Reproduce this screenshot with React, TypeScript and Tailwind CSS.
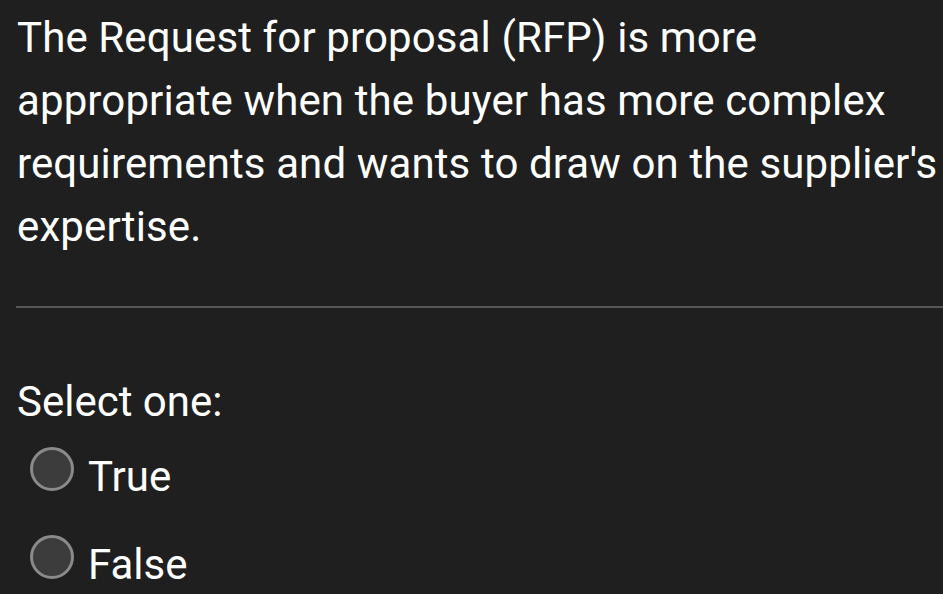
export default function App() {
  const options = ["True", "False"];

  return (
    <div
      className="h-[594px] w-full overflow-hidden bg-[#1f1f1f] text-white"
      style={{ fontFamily: "Roboto, 'Noto Sans', sans-serif" }}
    >
      <p className="pl-[17px] pt-[6px] text-[42px] leading-[63px] tracking-[0.12px]">
        The Request for proposal (RFP) is more appropriate when the buyer has
        more complex requirements and wants to draw on the supplier's
        expertise.
      </p>

      <div className="ml-[16px] mt-[48px] h-[2px] bg-[#555555]" />

      <div className="pl-[17px] pt-[62px] text-[42px] leading-[63px]">
        Select one:
      </div>

      <div className="mt-[12px] flex flex-col gap-[25px] pl-[30px]">
        {options.map((o) => (
          <label key={o} className="flex items-start gap-[14px]">
            <span className="mt-[2px] h-[44px] w-[44px] shrink-0 rounded-full border-[3px] border-[#8a8a8a] bg-[#3c3c3c]" />
            <span className="text-[42px] leading-[63px]">{o}</span>
          </label>
        ))}
      </div>
    </div>
  );
}
